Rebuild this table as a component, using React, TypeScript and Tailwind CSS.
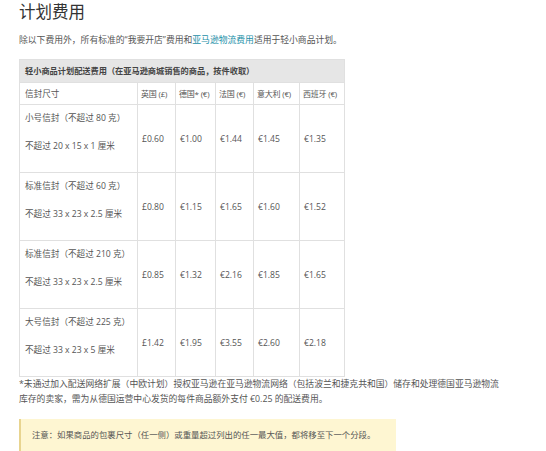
const rows = [
  { name: "小号信封（不超过 80 克）", size: "不超过 20 x 15 x 1 厘米", prices: ["£0.60", "€1.00", "€1.44", "€1.45", "€1.35"] },
  { name: "标准信封（不超过 60 克）", size: "不超过 33 x 23 x 2.5 厘米", prices: ["£0.80", "€1.15", "€1.65", "€1.60", "€1.52"] },
  { name: "标准信封（不超过 210 克）", size: "不超过 33 x 23 x 2.5 厘米", prices: ["£0.85", "€1.32", "€2.16", "€1.85", "€1.65"] },
  { name: "大号信封（不超过 225 克）", size: "不超过 33 x 23 x 5 厘米", prices: ["£1.42", "€1.95", "€3.55", "€2.60", "€2.18"] },
];

const heads = ["英国 (£)", "德国* (€)", "法国 (€)", "意大利 (€)", "西班牙 (€)"];

export default function App() {
  return (
    <div className="w-[546px] h-[451px] bg-white px-[19px] text-[#555] font-['Open_Sans','Noto_Sans_CJK_SC',sans-serif]">
      <h1 className="text-[16.5px] leading-[24px] text-[#333]">计划费用</h1>
      <p className="mt-[10px] text-[8.8px] leading-[12px]">
        除以下费用外，所有标准的“我要开店”费用和<span className="text-[#1a8fa8]">亚马逊物流费用</span>适用于轻小商品计划。
      </p>

      <table className="mt-[13px] w-[325px] table-fixed border-collapse text-[8.6px] leading-[12px]">
        <colgroup>
          <col className="w-[118px]" />
          <col className="w-[38px]" />
          <col className="w-[40px]" />
          <col className="w-[38px]" />
          <col className="w-[46px]" />
          <col className="w-[45px]" />
        </colgroup>
        <thead>
          <tr className="h-[23px] bg-[#e6e6e6]">
            <th colSpan={6} className="border border-[#e0e0e0] px-[5px] text-left text-[8.2px] font-semibold text-[#444]">
              轻小商品计划配送费用（在亚马逊商城销售的商品，按件收取）
            </th>
          </tr>
          <tr className="h-[22px]">
            <td className="border border-[#e0e0e0] px-[5px]">信封尺寸</td>
            {heads.map((h) => (
              <td key={h} className="border border-[#e0e0e0] px-[3px] text-[8px] tracking-[-0.2px] whitespace-nowrap">{h}</td>
            ))}
          </tr>
        </thead>
        <tbody>
          {rows.map((r) => (
            <tr key={r.name + r.size} className="h-[67px]">
              <td className="border border-[#e0e0e0] px-[5px] pt-[7px] pb-[4px] align-top">
                <p className="mb-[16px]">{r.name}</p>
                <p className="mb-[16px]">{r.size}</p>
              </td>
              {r.prices.map((p, i) => (
                <td key={i} className="border border-[#e0e0e0] px-[4px] align-middle">{p}</td>
              ))}
            </tr>
          ))}
        </tbody>
      </table>

      <p className="w-[486px] text-[8.8px] leading-[15px]">
        *未通过加入配送网络扩展（中欧计划）授权亚马逊在亚马逊物流网络（包括波兰和捷克共和国）储存和处理德国亚马逊物流库存的卖家，需为从德国运营中心发货的每件商品额外支付 €0.25 的配送费用。
      </p>

      <div className="mt-[12px] w-[377px] h-[32px] flex items-center border-l-2 border-[#e8d48f] bg-[#fef6d2] pl-[11px] text-[8.4px] whitespace-nowrap">
        注意：如果商品的包裹尺寸（任一侧）或重量超过列出的任一最大值，都将移至下一个分段。
      </div>
    </div>
  );
}
